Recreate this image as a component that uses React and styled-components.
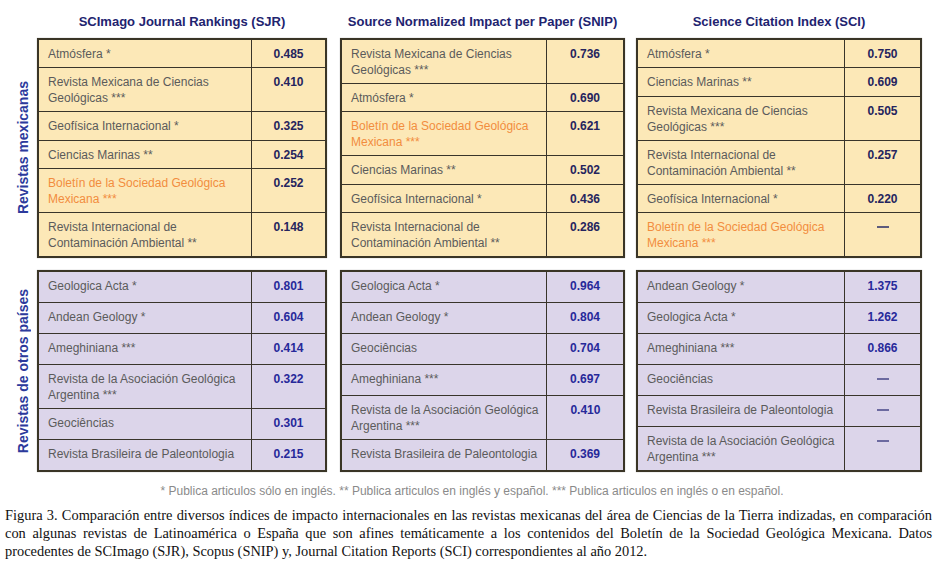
import React from "react";
import styled, { createGlobalStyle } from "styled-components";

const Global = createGlobalStyle`
  html, body { margin: 0; padding: 0; background: #ffffff; }
  body { width: 935px; height: 566px; overflow: hidden; }
`;

const SANS = `"Liberation Sans Narrow", "Arial Narrow", "Liberation Sans", Arial, sans-serif`;

const Page = styled.div`
  width: 935px;
  font-family: ${SANS};
`;

const Figure = styled.div`
  display: grid;
  grid-template-columns: 37px 290px 298px 297px;
  grid-template-rows: 38px 220px 214px 34px;
`;

const Heading = styled.div`
  align-self: end;
  padding-bottom: 8px;
  margin-left: ${(p) => p.$offset || 0}px;
  text-align: center;
  color: #22236f;
  font-weight: bold;
  font-size: 13px;
  line-height: 16px;
  white-space: nowrap;
`;

const SideLabel = styled.div`
  writing-mode: vertical-rl;
  transform: rotate(180deg);
  justify-self: center;
  align-self: center;
  margin-left: 8px;
  margin-top: ${(p) => p.$offset || 0}px;
  color: #2c3a9c;
  font-weight: bold;
  font-size: 14px;
  white-space: nowrap;
`;

const Table = styled.div`
  box-sizing: border-box;
  display: flex;
  flex-direction: column;
  border: 2px solid #3a3526;
  background: ${(p) => (p.$tone === "yellow" ? "#fce8b7" : "#dcd5ea")};
  margin-top: ${(p) => (p.$tone === "yellow" ? "0" : "12px")};
  margin-left: ${(p) => p.$offset}px;
  box-shadow: 0 0 1px rgba(0, 0, 0, 0.35);
`;

const Row = styled.div`
  display: grid;
  grid-template-columns: 1fr ${(p) => p.$valueWidth}px;
  flex: ${(p) => (p.$grow ? "1 1 auto" : "0 0 auto")};
  border-bottom: 1px solid #39342a;
  &:last-child { border-bottom: none; }
`;

const Name = styled.div`
  padding: 6px 8px 5px 9px;
  border-right: 1px solid #39342a;
  font-size: 12px;
  line-height: 16px;
  color: ${(p) => (p.$highlight ? "#f28d3e" : "#5b5b5b")};
  white-space: nowrap;
`;

const Value = styled.div`
  padding: 6px 4px 5px 4px;
  text-align: center;
  font-size: 12px;
  line-height: 16px;
  font-weight: bold;
  color: ${(p) => (p.$tone === "yellow" ? "#25245e" : "#27299a")};
`;

const Dash = styled.span`
  display: inline-block;
  width: 12px;
  height: 2px;
  background: ${(p) => (p.$tone === "yellow" ? "#5d5b7c" : "#6c6aa0")};
  vertical-align: middle;
  margin-top: -2px;
`;

const Footnote = styled.div`
  grid-column: 1 / -1;
  align-self: center;
  padding-top: 4px;
  padding-left: 22px;
  text-align: center;
  color: #8a8a8a;
  font-size: 12px;
  line-height: 14px;
`;

const Caption = styled.div`
  padding: 0 3px 0 5px;
  font-family: "Liberation Serif", "Times New Roman", serif;
  font-size: 14.4px;
  line-height: 18px;
  color: #111111;
`;

const CaptionLine = styled.span`
  display: block;
  white-space: nowrap;
  text-align: justify;
  text-align-last: ${(p) => (p.$last ? "left" : "justify")};
`;

const S = (name, value, hl) => ({ lines: name.split("|"), value, hl });

const data = {
  sjr: {
    width: 73,
    offset: 0,
    yellow: [
      S("Atmósfera *", "0.485"),
      S("Revista Mexicana de Ciencias|Geológicas ***", "0.410"),
      S("Geofísica Internacional *", "0.325"),
      S("Ciencias Marinas **", "0.254"),
      S("Boletín de la Sociedad Geológica|Mexicana ***", "0.252", true),
      S("Revista Internacional de|Contaminación Ambiental **", "0.148"),
    ],
    purple: [
      S("Geologica Acta *", "0.801"),
      S("Andean Geology *", "0.604"),
      S("Ameghiniana ***", "0.414"),
      S("Revista de la Asociación Geológica|Argentina ***", "0.322"),
      S("Geociências", "0.301"),
      S("Revista Brasileira de Paleontologia", "0.215"),
    ],
  },
  snip: {
    width: 76,
    offset: 13,
    yellow: [
      S("Revista Mexicana de Ciencias|Geológicas ***", "0.736"),
      S("Atmósfera *", "0.690"),
      S("Boletín de la Sociedad Geológica|Mexicana ***", "0.621", true),
      S("Ciencias Marinas **", "0.502"),
      S("Geofísica Internacional *", "0.436"),
      S("Revista Internacional de|Contaminación Ambiental **", "0.286"),
    ],
    purple: [
      S("Geologica Acta *", "0.964"),
      S("Andean Geology *", "0.804"),
      S("Geociências", "0.704"),
      S("Ameghiniana ***", "0.697"),
      S("Revista de la Asociación Geológica|Argentina ***", "0.410"),
      S("Revista Brasileira de Paleontologia", "0.369"),
    ],
  },
  sci: {
    width: 75,
    offset: 11,
    yellow: [
      S("Atmósfera *", "0.750"),
      S("Ciencias Marinas **", "0.609"),
      S("Revista Mexicana de Ciencias|Geológicas ***", "0.505"),
      S("Revista Internacional de|Contaminación Ambiental **", "0.257"),
      S("Geofísica Internacional *", "0.220"),
      S("Boletín de la Sociedad Geológica|Mexicana ***", null, true),
    ],
    purple: [
      S("Andean Geology *", "1.375"),
      S("Geologica Acta *", "1.262"),
      S("Ameghiniana ***", "0.866"),
      S("Geociências", null),
      S("Revista Brasileira de Paleontologia", null),
      S("Revista de la Asociación Geológica|Argentina ***", null),
    ],
  },
};

function Section({ set, tone }) {
  const rows = set[tone];
  return (
    <Table $tone={tone} $offset={set.offset}>
      {rows.map((r, i) => (
        <Row key={i} $valueWidth={set.width} $grow={r.lines.length === 1}>
          <Name $highlight={r.hl}>
            {r.lines.map((l, j) => (
              <React.Fragment key={j}>
                {j > 0 && <br />}
                {l}
              </React.Fragment>
            ))}
          </Name>
          <Value $tone={tone}>{r.value ? r.value : <Dash $tone={tone} />}</Value>
        </Row>
      ))}
    </Table>
  );
}

const captionLines = [
  "Figura 3. Comparación entre diversos índices de impacto internacionales en las revistas mexicanas del área de Ciencias de la Tierra indizadas, en comparación",
  "con algunas revistas de Latinoamérica o España que son afines temáticamente a los contenidos del Boletín de la Sociedad Geológica Mexicana. Datos",
  "procedentes de SCImago (SJR), Scopus (SNIP) y, Journal Citation Reports (SCI) correspondientes al año 2012.",
];

export default function App() {
  return (
    <Page>
      <Global />
      <Figure>
        <div />
        <Heading $offset={data.sjr.offset}>SCImago Journal Rankings (SJR)</Heading>
        <Heading $offset={data.snip.offset}>Source Normalized Impact per Paper (SNIP)</Heading>
        <Heading $offset={data.sci.offset}>Science Citation Index (SCI)</Heading>

        <SideLabel>Revistas mexicanas</SideLabel>
        <Section set={data.sjr} tone="yellow" />
        <Section set={data.snip} tone="yellow" />
        <Section set={data.sci} tone="yellow" />

        <SideLabel $offset={12}>Revistas de otros países</SideLabel>
        <Section set={data.sjr} tone="purple" />
        <Section set={data.snip} tone="purple" />
        <Section set={data.sci} tone="purple" />

        <Footnote>
          * Publica articulos sólo en inglés. ** Publica articulos en inglés y español. *** Publica articulos en inglés o en español.
        </Footnote>
      </Figure>
      <Caption>
        {captionLines.map((l, i) => (
          <CaptionLine key={i} $last={i === captionLines.length - 1}>
            {l}
          </CaptionLine>
        ))}
      </Caption>
    </Page>
  );
}
